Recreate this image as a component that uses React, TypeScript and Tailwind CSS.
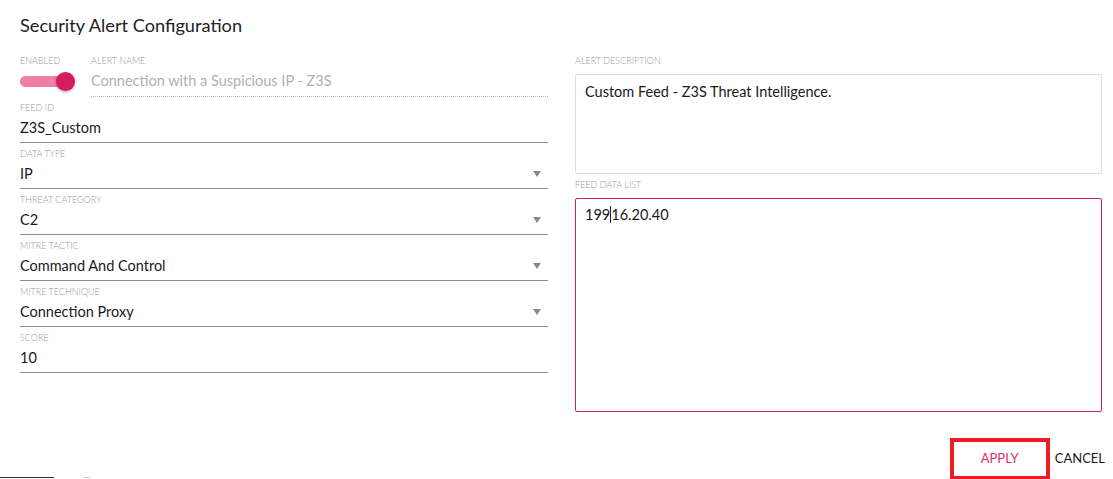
import React from "react";

const Arrow = () => (
  <svg width="8" height="6" viewBox="0 0 8 6" className="mr-[7px]">
    <path d="M0 0 L8 0 L4 6 Z" fill="#8a8a8a" />
  </svg>
);

const Label = ({ children }: { children: React.ReactNode }) => (
  <div className="h-[11px] text-[9px] leading-[11px] text-[#9a9a9a] uppercase font-light whitespace-nowrap">
    {children}
  </div>
);

const Field = ({ label, value, select }: { label: string; value: string; select?: boolean }) => (
  <div className="pt-[5px]">
    <Label>{label}</Label>
    <div className="h-[30px] flex items-center justify-between border-b border-[#8f8f8f] text-[14.5px] text-[#1a1a1a]">
      <span>{value}</span>
      {select && <Arrow />}
    </div>
  </div>
);

export default function App() {
  return (
    <div
      className="w-[1113px] h-[479px] bg-white overflow-hidden flex flex-col"
      style={{ fontFamily: "Lato, 'Noto Sans', sans-serif" }}
    >
      <div className="px-[20px] pt-[13px] h-[55px] text-[18.2px] leading-[24px] text-[#222]">
        Security Alert Configuration
      </div>
      <div className="flex pl-[20px] pr-[11px] gap-[27px]">
        {/* left column */}
        <div className="w-[528px] shrink-0 flex flex-col">
          <div className="flex">
            <div className="w-[71px]">
              <Label>Enabled</Label>
              <div className="h-[31px] flex items-center">
                <div className="relative w-[53px] h-[11px] rounded-full bg-[#f07fa6]">
                  <div className="absolute right-[-2px] top-[-4px] w-[19px] h-[19px] rounded-full bg-[#d41d5e] shadow-[0_1px_3px_rgba(0,0,0,0.35)]" />
                </div>
              </div>
            </div>
            <div className="flex-1">
              <Label>Alert Name</Label>
              <div className="h-[31px] flex items-center border-b border-dotted border-[#b5b5b5] text-[14.5px] text-[#b0b0b0] pb-[1px]">
                Connection with a Suspicious IP - Z3S
              </div>
            </div>
          </div>
          <Field label="Feed ID" value="Z3S_Custom" />
          <Field label="Data Type" value="IP" select />
          <Field label="Threat Category" value="C2" select />
          <Field label="Mitre Tactic" value="Command And Control" select />
          <Field label="Mitre Technique" value="Connection Proxy" select />
          <Field label="Score" value="10" />
        </div>
        {/* right column */}
        <div className="w-[527px] shrink-0 flex flex-col">
          <Label>Alert Description</Label>
          <div className="mt-[8px] h-[100px] border border-[#dedede] rounded-[2px] px-[9px] pt-[7px] text-[14.5px] leading-[20px] text-[#1a1a1a]">
            Custom Feed - Z3S Threat Intelligence.
          </div>
          <div className="mt-[5px]">
            <Label>Feed Data List</Label>
          </div>
          <div className="mt-[8px] h-[214px] border border-[#d21f5c] rounded-[2px] px-[9px] pt-[6px] text-[14.5px] leading-[20px] text-[#1a1a1a]">
            199<span className="inline-block w-[1px] h-[17px] bg-[#222] align-[-3px]" />16.20.40
          </div>
        </div>
      </div>
      <div className="flex-1 flex items-end justify-between">
        <div className="flex items-end mb-[1px]">
          <div className="w-[54px] h-[1px] bg-[#333]" />
          <div className="ml-[30px] w-[6px] h-[1px] bg-[#ccc]" />
        </div>
        <div className="flex items-end mr-[8px]">
          <div className="w-[100px] h-[42px] border-[4px] border-[#ee1c24] flex items-center justify-center text-[13px] text-[#dc2f68] mb-[-1px]">
            APPLY
          </div>
          <div className="ml-[5px] h-[41px] flex items-center text-[13px] text-[#1a1a1a]">CANCEL</div>
        </div>
      </div>
    </div>
  );
}
